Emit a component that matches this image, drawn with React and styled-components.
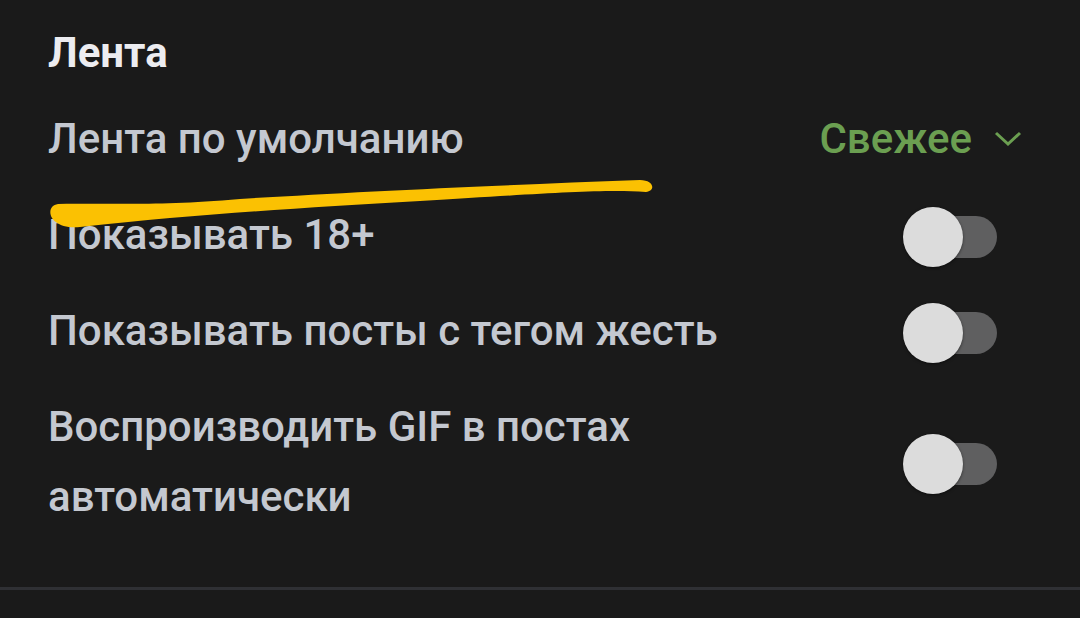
import React from "react";
import styled, { createGlobalStyle } from "styled-components";

const Global = createGlobalStyle`
  html, body { margin: 0; padding: 0; background: #1a1a1a; }
  body { font-family: Roboto, "Noto Sans", sans-serif; }
`;

const Page = styled.div`
  position: relative;
  width: 1080px;
  height: 618px;
  background: #1a1a1a;
  overflow: hidden;
`;

const Section = styled.section`
  padding: 27px 0 40px 48px;
  border-bottom: 3px solid #2f3034;
`;

const Title = styled.h2`
  margin: 0 0 14px;
  font-size: 42px;
  line-height: 52px;
  font-weight: 700;
  color: #ececf0;
`;

const Row = styled.div`
  display: flex;
  align-items: center;
  justify-content: space-between;
  padding: 11px 0;
`;

const Label = styled.div`
  padding-bottom: 4px;
  font-size: 42px;
  line-height: 70px;
  font-weight: 500;
  color: #c4c8d0;
  max-width: ${(p) => p.$max || "none"};
`;

const Select = styled.div`
  display: flex;
  align-items: center;
  gap: 22px;
  padding-right: 58px;
  padding-bottom: 4px;
  color: #6b9f51;
  font-size: 42px;
  line-height: 70px;
  font-weight: 500;
`;

const Switch = styled.div`
  position: relative;
  width: 94px;
  height: 60px;
  margin-right: 83px;
  display: flex;
  align-items: center;
  justify-content: flex-end;
`;

const Track = styled.div`
  width: 82px;
  height: 42px;
  border-radius: 21px;
  background: #5f5f60;
`;

const Thumb = styled.div`
  position: absolute;
  left: 0;
  top: 0;
  width: 60px;
  height: 60px;
  border-radius: 50%;
  background: #dcdcdc;
  box-shadow: 0 1px 3px rgba(0, 0, 0, 0.5);
`;

const Scribble = styled.svg`
  position: absolute;
  left: 0;
  top: 0;
  pointer-events: none;
`;

const Toggle = () => (
  <Switch>
    <Track />
    <Thumb />
  </Switch>
);

export default function App() {
  return (
    <Page>
      <Global />
      <Section>
        <Title>Лента</Title>
        <Row>
          <Label>Лента по умолчанию</Label>
          <Select>
            Свежее
            <svg width="28" height="16" viewBox="0 0 28 16">
              <path d="M2 2 L14 13 L26 2" fill="none" stroke="#6b9f51" strokeWidth="3" />
            </svg>
          </Select>
        </Row>
        <Row>
          <Label>Показывать 18+</Label>
          <Toggle />
        </Row>
        <Row>
          <Label>Показывать посты с тегом жесть</Label>
          <Toggle />
        </Row>
        <Row>
          <Label $max="640px">Воспроизводить GIF в постах автоматически</Label>
          <Toggle />
        </Row>
      </Section>
      <Scribble width="1080" height="618" viewBox="0 0 1080 618">
        <path
          d="M58 204 C120 203, 160 206, 240 199 C350 192, 480 186, 640 180 C654 180, 656 191, 646 192 C600 189, 540 194, 420 201 C300 208, 200 214, 80 227 C48 230, 44 206, 58 204 Z"
          fill="#fbc102"
        />
      </Scribble>
    </Page>
  );
}
